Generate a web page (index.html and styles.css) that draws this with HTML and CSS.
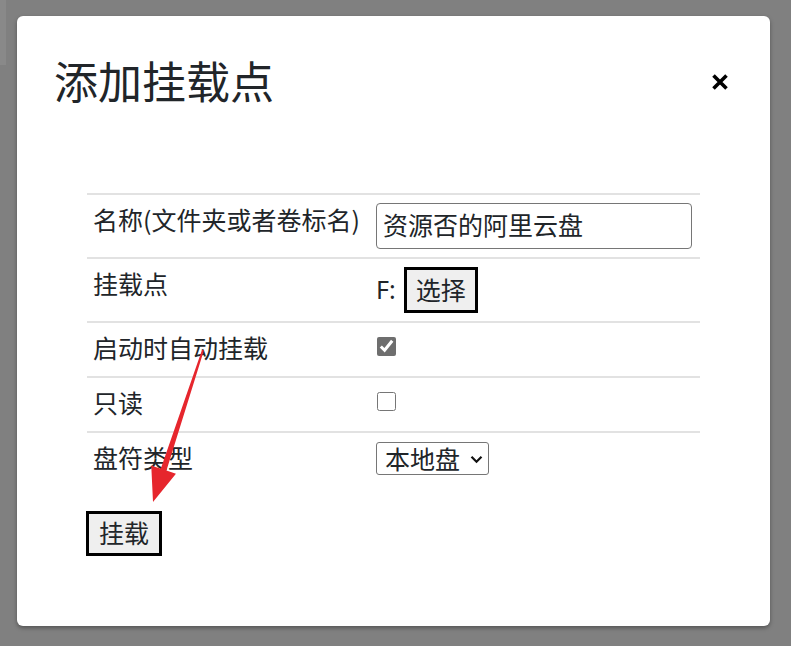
FILE: index.html
```html
<!DOCTYPE html>
<html lang="zh-CN">
<head>
<meta charset="utf-8">
<title>添加挂载点</title>
<link rel="stylesheet" href="styles.css">
</head>
<body>
<div class="page-hint"></div>
<div class="modal">
  <div class="modal-header">
    <h1 class="modal-title">添加挂载点</h1>
    <button class="close" type="button" aria-label="关闭">
      <svg width="18" height="18" viewBox="0 0 18 18"><path d="M2.5 2.5 L15.5 15.5 M15.5 2.5 L2.5 15.5" stroke="#000" stroke-width="3.6" fill="none"/></svg>
    </button>
  </div>
  <div class="modal-body">
    <table class="form-table">
      <tbody>
        <tr>
          <td class="col-label">名称(文件夹或者卷标名)</td>
          <td class="col-value"><input class="text-input" type="text" value="资源否的阿里云盘"></td>
        </tr>
        <tr>
          <td class="col-label">挂载点</td>
          <td class="col-value"><span class="drive">F:</span><button class="btn" type="button">选择</button></td>
        </tr>
        <tr>
          <td class="col-label">启动时自动挂载</td>
          <td class="col-value"><input class="check" type="checkbox" checked></td>
        </tr>
        <tr>
          <td class="col-label">只读</td>
          <td class="col-value"><input class="check" type="checkbox"></td>
        </tr>
        <tr>
          <td class="col-label">盘符类型</td>
          <td class="col-value">
            <span class="select-wrap">
              <select class="select">
                <option>本地盘</option>
                <option>网络盘</option>
              </select>
              <svg class="chevron" width="13" height="9" viewBox="0 0 13 9"><polyline points="1.5,1.8 6.5,6.8 11.5,1.8" fill="none" stroke="#111" stroke-width="2.2"/></svg>
            </span>
          </td>
        </tr>
      </tbody>
    </table>
    <button class="btn btn-submit" type="button">挂载</button>
  </div>
</div>
<svg class="annot-arrow" width="70" height="170" viewBox="0 0 70 170">
  <polygon points="62.05,9.7 63.95,10.3 26.45,130.6 35.95,133.8 13,162 11.25,125.6 20.75,128.8" fill="#e6262d"/>
</svg>
</body>
</html>
```

FILE: styles.css
```css
* {
  box-sizing: border-box;
}

html, body {
  margin: 0;
  height: 100%;
}

body {
  background: #808080;
  padding: 16px 21px 0 17px;
  font-family: "Noto Sans CJK SC", "Noto Sans", sans-serif;
  color: #212529;
  overflow: hidden;
  position: relative;
}

.page-hint {
  position: absolute;
  left: 0;
  top: 0;
  width: 6px;
  height: 65px;
  background: #898989;
}

.modal {
  background: #fff;
  border-radius: 6px;
  box-shadow: 0 2px 4px rgba(0, 0, 0, 0.35);
}

.modal-header {
  display: flex;
  align-items: center;
  justify-content: space-between;
  padding: 31px 41px 0 37px;
}

.modal-title {
  margin: 0;
  font-size: 44px;
  font-weight: 400;
  line-height: 66px;
  color: #212529;
}

.close {
  border: 0;
  background: none;
  padding: 0;
  width: 18px;
  height: 18px;
  display: block;
  margin-top: 4px;
}

.close svg {
  display: block;
}

.modal-body {
  padding: 80px 70px 70px 70px;
}

.form-table {
  width: 100%;
  border-collapse: collapse;
  table-layout: fixed;
  font-size: 25px;
  line-height: 36px;
}

.form-table td {
  border-top: 2px solid #e2e2e2;
  padding: 8px 6px 8px 6px;
  vertical-align: top;
}

.form-table td.col-label {
  width: 283px;
  padding-top: 6px;
  padding-bottom: 11px;
}

.text-input {
  display: block;
  width: 316px;
  height: 46px;
  margin: 0;
  border: 1px solid #767676;
  border-radius: 4px;
  padding: 0 6px 4px 6px;
  font-family: inherit;
  font-size: 25px;
  color: #212529;
}

.drive {
  font-family: "Noto Sans", sans-serif;
  vertical-align: top;
  display: inline-block;
  line-height: 44px;
}

.btn {
  display: inline-block;
  vertical-align: top;
  height: 46px;
  margin: 0 0 0 8px;
  padding: 0 9px 2px 9px;
  border: 3px solid #000;
  border-radius: 0;
  background: #efefef;
  font-family: inherit;
  font-size: 25px;
  line-height: 34px;
  color: #212529;
}

.check {
  display: block;
  width: 19px;
  height: 19px;
  margin: 6px 0 0 1px;
  accent-color: #6e6e6e;
}

.select-wrap {
  position: relative;
  display: block;
  width: 113px;
  margin-top: 1px;
}

.select {
  display: block;
  appearance: none;
  -webkit-appearance: none;
  width: 113px;
  height: 33px;
  margin: 0;
  padding: 0 0 2px 8px;
  border: 1px solid #767676;
  border-radius: 3px;
  background: #fff;
  font-family: inherit;
  font-size: 25px;
  line-height: 30px;
  color: #212529;
}

.chevron {
  position: absolute;
  right: 6px;
  top: 13px;
  pointer-events: none;
}

.btn-submit {
  margin: 25px 0 0 -1px;
  height: 45px;
  padding: 0 10px 3px 10px;
}

.annot-arrow {
  position: absolute;
  left: 140px;
  top: 340px;
  pointer-events: none;
}
```
